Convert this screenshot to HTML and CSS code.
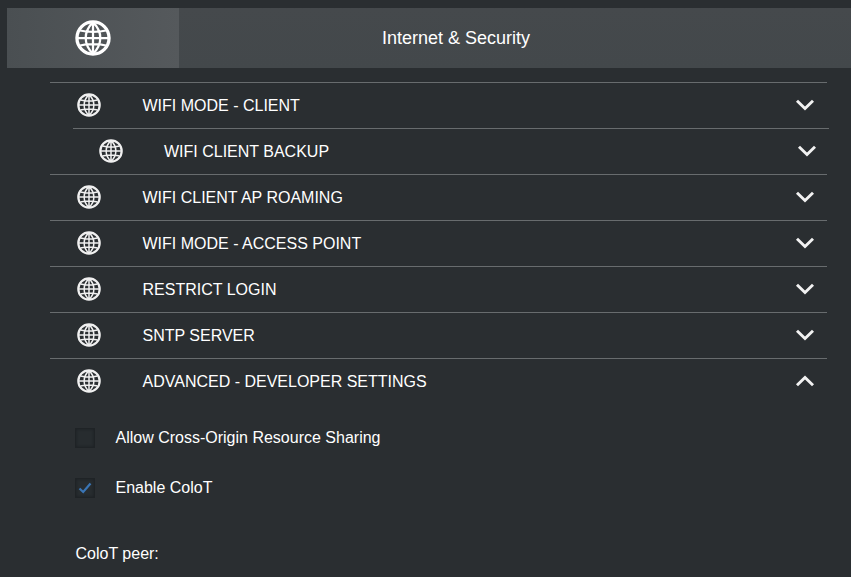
FILE: index.html
```html
<!DOCTYPE html>
<html lang="en">
<head>
<meta charset="utf-8">
<title>Internet &amp; Security</title>
<link rel="stylesheet" href="styles.css">
</head>
<body>
<svg class="defs" width="0" height="0" aria-hidden="true">
  <symbol id="globe" viewBox="0 0 24 24">
    <circle cx="12" cy="12" r="10.7" fill="none" stroke="currentColor" stroke-width="2.2"/>
    <path d="M12 1.4V22.6M1.4 12H22.6M3.4 7C8 8.2 16 8.2 20.6 7M3.4 17C8 15.8 16 15.8 20.6 17M12 1.4C5.5 8 5.5 16 12 22.6M12 1.4C18.5 8 18.5 16 12 22.6" fill="none" stroke="currentColor" stroke-width="1.5"/>
  </symbol>
  <symbol id="chev" viewBox="0 0 18 12">
    <path d="M1.8 2.2L9 9.2L16.2 2.2" fill="none" stroke="currentColor" stroke-width="2.6"/>
  </symbol>
</svg>
<header class="topbar">
  <div class="tab"><svg class="globe-lg"><use href="#globe"/></svg></div>
  <h1 class="title">Internet &amp; Security</h1>
</header>
<main class="list">
  <div class="row"><svg class="globe"><use href="#globe"/></svg><span class="label">WIFI MODE - CLIENT</span><svg class="chev"><use href="#chev"/></svg></div>
  <div class="row sub"><svg class="globe"><use href="#globe"/></svg><span class="label">WIFI CLIENT BACKUP</span><svg class="chev"><use href="#chev"/></svg></div>
  <div class="row"><svg class="globe"><use href="#globe"/></svg><span class="label">WIFI CLIENT AP ROAMING</span><svg class="chev"><use href="#chev"/></svg></div>
  <div class="row"><svg class="globe"><use href="#globe"/></svg><span class="label">WIFI MODE - ACCESS POINT</span><svg class="chev"><use href="#chev"/></svg></div>
  <div class="row"><svg class="globe"><use href="#globe"/></svg><span class="label">RESTRICT LOGIN</span><svg class="chev"><use href="#chev"/></svg></div>
  <div class="row"><svg class="globe"><use href="#globe"/></svg><span class="label">SNTP SERVER</span><svg class="chev"><use href="#chev"/></svg></div>
  <div class="row"><svg class="globe"><use href="#globe"/></svg><span class="label">ADVANCED - DEVELOPER SETTINGS</span><svg class="chev up"><use href="#chev"/></svg></div>
</main>
<section class="panel">
  <div class="check-row"><span class="box"></span><span>Allow Cross-Origin Resource Sharing</span></div>
  <div class="check-row"><span class="box"><svg class="tick" viewBox="0 0 18 18"><path d="M3.5 9.5L7.2 13L14.5 4.5" fill="none" stroke="#3a75b5" stroke-width="2.2"/></svg></span><span>Enable ColoT</span></div>
  <p class="peer">ColoT peer:</p>
</section>
</body>
</html>
```
FILE: styles.css
```css
html, body { margin: 0; padding: 0; height: 100%; overflow: hidden; }
body {
  background: #2a2e31;
  color: #fff;
  font-family: "Liberation Sans", Arial, sans-serif;
  font-size: 16px;
}
.defs { position: absolute; }
.topbar {
  display: flex;
  align-items: stretch;
  height: 60px;
  margin: 8px 0 14px 7px;
  background: linear-gradient(to bottom, #45494c, #43484b);
}
.tab {
  width: 172px;
  display: flex;
  align-items: center;
  justify-content: center;
  background: linear-gradient(to right, #4a4f52, #55595c);
  flex: none;
}
.globe-lg { width: 36px; height: 36px; color: #fff; margin-right: 1px; }
.title {
  flex: 1;
  margin: 0;
  padding-right: 118px;
  text-align: center;
  font-size: 18px;
  font-weight: 400;
  line-height: 60px;
}
.list { margin: 0 24px 0 50px; }
.row {
  display: flex;
  align-items: center;
  height: 45px;
  border-top: 1px solid #686c6e;
}
.row .globe { width: 24px; height: 24px; margin: -1px 0 0 26.5px; color: #f0f0f0; flex: none; }
.row .label { margin-left: 42px; flex: 1; }
.row .chev { width: 20px; height: 14px; margin: -1px 12px 0 0; color: #f2f2f2; flex: none; }
.row .chev.up { transform: rotate(180deg); }
.row.sub { margin: 0 -2px 0 23px; }
.row.sub .globe { margin-left: 26px; }
.row.sub .label { margin-left: 41px; }
.panel { padding: 2px 0 0 75px; }
.check-row {
  display: flex;
  align-items: center;
  gap: 20.5px;
  height: 20px;
  margin-top: 30px;
}
.check-row:first-child { margin-top: 22px; }
.box {
  width: 20px;
  height: 20px;
  box-sizing: border-box;
  background: #272c2f;
  border: 1px solid #1f2326;
  box-shadow: inset 0 0 3px #1b1f22;
  flex: none;
}
.tick { display: block; width: 18px; height: 18px; }
.peer { margin: 47px 0 0 0.5px; line-height: 18px; }
```
